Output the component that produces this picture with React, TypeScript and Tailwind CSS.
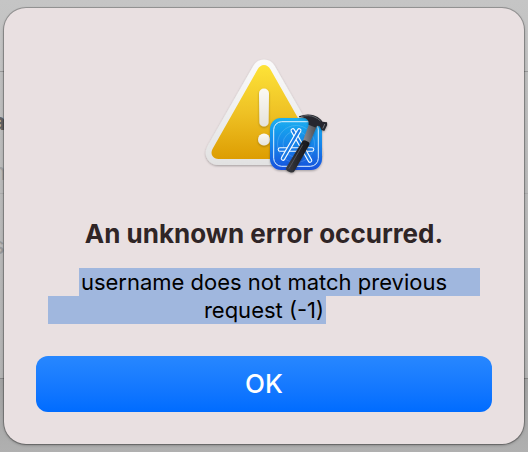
function WarningIcon() {
  return (
    <svg width="132" height="124" viewBox="198 54 132 124" role="img" aria-label="Warning">
      <defs>
        <linearGradient id="rim" x1="0" y1="0" x2="0" y2="1">
          <stop offset="0" stopColor="#fbfbfb" />
          <stop offset="1" stopColor="#e2e2e2" />
        </linearGradient>
        <linearGradient id="yellow" x1="0" y1="0" x2="0" y2="1">
          <stop offset="0" stopColor="#fde338" />
          <stop offset="0.5" stopColor="#efc225" />
          <stop offset="1" stopColor="#dd9d02" />
        </linearGradient>
        <linearGradient id="mark" x1="0" y1="0" x2="0" y2="1">
          <stop offset="0" stopColor="#fbf9f4" />
          <stop offset="1" stopColor="#e6e3dc" />
        </linearGradient>
        <linearGradient id="badge" x1="0" y1="0" x2="0" y2="1">
          <stop offset="0" stopColor="#1bb0f0" />
          <stop offset="0.5" stopColor="#1686ea" />
          <stop offset="1" stopColor="#1550dc" />
        </linearGradient>
        <linearGradient id="grip" x1="0" y1="0" x2="1" y2="0">
          <stop offset="0" stopColor="#3c3d43" />
          <stop offset="0.5" stopColor="#26272c" />
          <stop offset="1" stopColor="#15161a" />
        </linearGradient>
        <linearGradient id="neck" x1="0" y1="0" x2="1" y2="0">
          <stop offset="0" stopColor="#8d8e94" />
          <stop offset="1" stopColor="#4a4b51" />
        </linearGradient>
        <filter id="drop" x="-20%" y="-20%" width="140%" height="140%">
          <feDropShadow dx="0" dy="1" stdDeviation="1" floodOpacity="0.3" />
        </filter>
      </defs>
      <path
        d="M253.5 65.5 Q257 59.5 264 59.5 Q271 59.5 274.5 65.5 L320.5 146 Q324.5 153.5 320.5 159.2 Q316.8 165 309.5 165 L218.5 165 Q211.2 165 207.5 159.2 Q203.8 153.5 207.5 146 Z"
        fill="url(#rim)"
        filter="url(#drop)"
      />
      <path
        d="M257.5 69.5 Q260 65 264 65 Q268 65 270.5 69.500 L315.5 149 Q317.5 153 315.5 156 Q313.5 159 309.5 159 L218.5 159 Q214.5 159 212.5 156 Q210.5 153 212.5 149 Z"
        fill="url(#yellow)"
      />
      <g fill="url(#mark)" filter="url(#drop)">
        <path d="M259 93.5 a5 5 0 0 1 10 0 L268.6 122.500 a4.6 4 0 0 1 -9.2 0 Z" />
        <circle cx="264" cy="139.5" r="6" />
      </g>
      <rect x="270" y="118" width="52" height="52" rx="11" fill="url(#badge)" filter="url(#drop)" />
      <g fill="none" stroke="#ffffff" strokeOpacity="0.2" strokeWidth="0.8">
        <circle cx="296" cy="144" r="13" />
        <circle cx="296" cy="144" r="18.5" />
      </g>
      <rect x="273.7" y="121.7" width="44.6" height="44.6" rx="8" fill="none" stroke="#e2f3ff" strokeWidth="1" />
      <g strokeLinecap="round">
        <path d="M280 149.5 H312" stroke="#f4faff" strokeWidth="4.6" />
        <path d="M280 149.5 H312" stroke="#1a7be6" strokeWidth="2.4" />
        <path d="M292.8 130.5 L310 160.5" stroke="#f4faff" strokeWidth="4.6" />
        <path d="M292.8 130.5 L310 160.5" stroke="#1a7be6" strokeWidth="2.4" />
        <path d="M299.2 130.500 L283 158.5" stroke="#f4faff" strokeWidth="4.6" />
        <path d="M299.2 130.5 L283 158.5" stroke="#1a7be6" strokeWidth="2.4" />
      </g>
      <g filter="url(#drop)">
        <path d="M309.5 123 L317 126 L309 144.5 L302.5 142 Z" fill="url(#neck)" />
        <path
          d="M302.5 141 Q303.5 139.8 305.500 140.6 L308.5 142 Q310 142.8 309.3 144.800 L294.500 171 Q293 173.5 289.5 172 Q285.5 170.5 286 168 Z"
          fill="url(#grip)"
        />
        <path
          d="M299 116.200 Q307 113.2 313.5 115.3 Q318 116.8 321 119.7 L322.5 121.8 L327 122.2 L327.2 125 L324.3 131 L321.5 130 L319.8 126.5 Q317 124.8 315.5 127.5 L308.5 124.8 Q309.5 120.2 305.5 118.2 Q302 117 299 117.2 Z"
          fill="#27282d"
        />
        <path d="M301 116.5 Q309 114.6 314 116.8 Q318 118.5 320.5 121" fill="none" stroke="#62646c" strokeWidth="1" />
        <path d="M324.8 124 L322.8 128.5" stroke="#74767d" strokeWidth="1" />
        <path d="M302.5 145 L289 168.500" stroke="#55575f" strokeWidth="0.9" strokeLinecap="round" />
      </g>
    </svg>
  );
}

function DimmedWindow() {
  return (
    <div
      aria-hidden="true"
      className="absolute inset-0 flex flex-col overflow-hidden bg-linear-to-b from-[#c5c5c5] to-[#adadad] text-2xl"
    >
      <div className="h-[72px] shrink-0 border-b border-[#999999]" />
      <div className="h-[307px] shrink-0 border-b border-[#858585] bg-linear-to-b from-[#bebebe] to-[#b3b3b3]">
        <div className="flex h-[122px] flex-col gap-4 border-b border-[#acacac] pt-8">
          <span className="-ml-2 leading-9 font-bold text-[#626262]">a</span>
          <span className="-ml-2 leading-8 text-[#a0a0a0]">n</span>
        </div>
        <span className="-ml-2 block pt-9 leading-8 text-[#999999]">s</span>
      </div>
      <div className="grow bg-linear-to-b from-[#a2a2a2] to-[#b0b0b0]" />
    </div>
  );
}

export default function App() {
  return (
    <main className="relative min-h-screen px-1 py-2 font-[Inter,'Liberation_Sans',sans-serif]">
      <DimmedWindow />
      <section
        role="alertdialog"
        aria-labelledby="alert-title"
        aria-describedby="alert-message"
        className="relative flex flex-col items-center rounded-[22px] bg-[#e9e0e1] px-8 pt-[46px] pb-8 shadow-[0_0_0_1px_rgba(0,0,0,0.22),0_1px_3px_rgba(0,0,0,0.35)]"
      >
        <WarningIcon />
        <h1 id="alert-title" className="mt-10 text-center text-[26px] leading-8 font-bold text-[#2f2526]">
          An unknown error occurred.
        </h1>
        <p id="alert-message" className="mt-[18px] w-full px-3 text-[22px] leading-7 text-black">
          <span className="grid grid-cols-[1fr_auto_1fr]">
            <span />
            <span className="bg-[#a0b7de] px-0.5">username does not match previous </span>
            <span className="bg-[#a0b7de]" />
          </span>
          <span className="grid grid-cols-[1fr_auto_1fr]">
            <span className="bg-[#a0b7de]" />
            <span className="bg-[#a0b7de] px-0.5">request (-1)</span>
            <span />
          </span>
        </p>
        <button
          type="button"
          className="mt-8 h-14 w-full rounded-xl bg-linear-to-b from-[#2787ff] to-[#006cff] text-[26px] leading-8 font-medium text-white"
        >
          OK
        </button>
      </section>
    </main>
  );
}
